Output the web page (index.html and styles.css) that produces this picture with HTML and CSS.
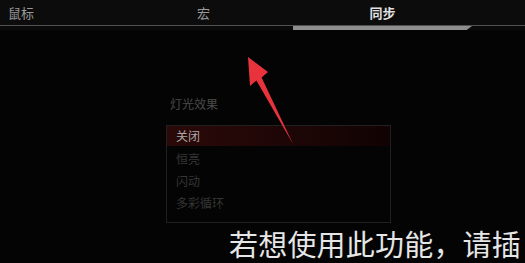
FILE: index.html
```html
<!DOCTYPE html>
<html lang="zh">
<head>
<meta charset="utf-8">
<link rel="stylesheet" href="styles.css">
</head>
<body>
<div class="page">
  <div class="tabs">
    <div class="tab tab-first">鼠标</div>
    <div class="tab">宏</div>
    <div class="tab tab-active">同步</div>
  </div>
  <div class="rail">
    <div class="rail-gap"></div>
    <div class="rail-bar"></div>
  </div>
  <div class="content">
    <div class="title">灯光效果</div>
    <div class="list">
      <div class="item item-selected">关闭</div>
      <div class="item">恒亮</div>
      <div class="item">闪动</div>
      <div class="item">多彩循环</div>
    </div>
  </div>
  <div class="subtitle">若想使用此功能，请插</div>
  <svg class="arrow" width="525" height="263" viewBox="0 0 525 263">
    <polygon points="248,57 268,72 261.6,77.6 293,144 256.4,80.4 250,86" fill="#e8333d"/>
  </svg>
</div>
</body>
</html>
```
FILE: styles.css
```css
html, body {
  margin: 0;
  padding: 0;
  background: #040404;
  width: 525px;
  height: 263px;
  overflow: hidden;
}
.page {
  position: relative;
  width: 525px;
  height: 263px;
  overflow: hidden;
  font-family: "Noto Sans CJK SC", "Noto Sans", sans-serif;
  background: #040404;
}
.tabs {
  display: flex;
  height: 25px;
  background: #0c0c0c;
}
.tab {
  width: 179px;
  text-align: center;
  font-size: 13px;
  line-height: 25px;
  color: #9a9a9a;
}
.tab-first {
  width: 106px;
  padding-left: 8px;
  text-align: left;
}
.tab-active {
  color: #e0e0e0;
  font-weight: bold;
}
.rail {
  display: flex;
  height: 4px;
  border-top: 1px solid #505050;
  background: #0a0a0a;
}
.rail-gap {
  width: 293px;
}
.rail-bar {
  width: 179px;
  height: 4px;
  background: #8e8e8e;
  clip-path: polygon(0 0, 100% 0, 97% 100%, 0 100%);
}
.content {
  padding-left: 166px;
  padding-top: 66px;
}
.title {
  padding-left: 4px;
  font-size: 12px;
  line-height: 16px;
  color: #4a4a4a;
}
.list {
  margin-top: 13px;
  width: 223px;
  border: 1px solid #202020;
  padding-bottom: 8px;
}
.item {
  height: 22px;
  line-height: 22px;
  padding-left: 9px;
  font-size: 12px;
  color: #363636;
}
.item-selected {
  height: 20px;
  line-height: 20px;
  margin-bottom: 2px;
  color: #aaaaaa;
  background: linear-gradient(90deg, #2c0909, #1a0505 70%, #110303);
}
.subtitle {
  margin-top: 5px;
  padding-left: 229px;
  white-space: nowrap;
  font-size: 29px;
  line-height: 31px;
  letter-spacing: 0.2px;
  color: #e6e6e6;
}
.arrow {
  position: absolute;
  left: 0;
  top: 0;
}
```
